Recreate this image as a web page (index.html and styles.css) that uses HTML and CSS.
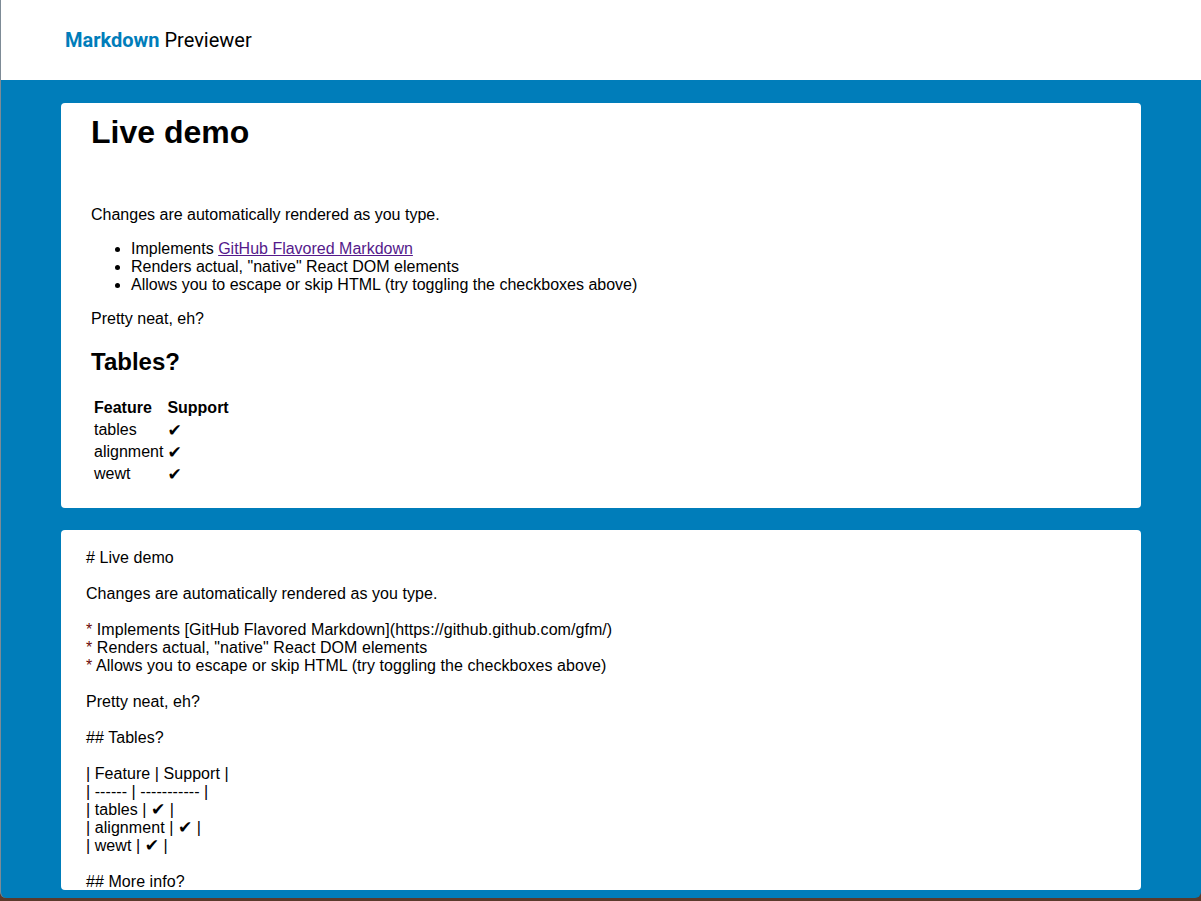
FILE: index.html
```html
<!DOCTYPE html>
<html lang="en">
<head>
<meta charset="utf-8">
<title>Markdown Previewer</title>
<link rel="stylesheet" href="styles.css">
</head>
<body>
<div class="window">
  <header class="topbar">
    <span class="brand">Markdown</span> Previewer
  </header>
  <main class="stage">
    <section class="card preview">
      <h1>Live demo</h1>
      <p>Changes are automatically rendered as you type.</p>
      <ul>
        <li>Implements <a href="#">GitHub Flavored Markdown</a></li>
        <li>Renders actual, "native" React DOM elements</li>
        <li>Allows you to escape or skip HTML (try toggling the checkboxes above)</li>
      </ul>
      <p>Pretty neat, eh?</p>
      <h2>Tables?</h2>
      <table>
        <thead>
          <tr><th>Feature</th><th>Support</th></tr>
        </thead>
        <tbody>
          <tr><td>tables</td><td class="check">✔</td></tr>
          <tr><td>alignment</td><td class="check">✔</td></tr>
          <tr><td>wewt</td><td class="check">✔</td></tr>
        </tbody>
      </table>
    </section>
    <section class="card editor">
<pre class="source"># Live demo

Changes are automatically rendered as you type.

<span class="mk">*</span> Implements [GitHub Flavored Markdown](https://github.github.com/gfm/)
<span class="mk">*</span> Renders actual, "native" React DOM elements
<span class="mk">*</span> Allows you to escape or skip HTML (try toggling the checkboxes above)

Pretty neat, eh?

## Tables?

| Feature | Support |
| ------ | ----------- |
| tables | <span class="check inline">✔</span> |
| alignment | <span class="check inline">✔</span> |
| wewt | <span class="check inline">✔</span> |

## More info?

Read usage information and more on [GitHub](//github.com/rexxars/react-markdown)</pre>
    </section>
  </main>
</div>
</body>
</html>
```

FILE: styles.css
```css
html, body {
  margin: 0;
  padding: 0;
}

body {
  background: #5a3a2b;
  font-family: "Liberation Sans", Arial, sans-serif;
  font-size: 16px;
  line-height: 18px;
  color: #000;
}

.window {
  height: 898px;
  border-left: 1px solid #7d8b96;
  border-radius: 0 0 6px 6px;
  overflow: hidden;
  display: flex;
  flex-direction: column;
  background: #007dba;
}

.topbar {
  height: 80px;
  flex: none;
  background: #fff;
  padding-left: 64px;
  font-family: Roboto, "Liberation Sans", sans-serif;
  font-size: 20px;
  line-height: 80px;
  color: #000;
}

.brand {
  color: #007dba;
  font-weight: bold;
}

.stage {
  flex: 1;
  display: flex;
  flex-direction: column;
  gap: 22px;
  padding: 23px 60px 8px 60px;
}

.card {
  background: #fff;
  border-radius: 4px;
}

.preview {
  padding: 11px 30px 22px;
}

.preview h1 {
  font-size: 32px;
  line-height: 37px;
  font-weight: bold;
  margin: 0 0 55px;
}

.preview p {
  margin: 16px 0;
}

.preview ul {
  margin: 16px 0;
  padding-left: 40px;
}

.preview h2 {
  font-size: 24px;
  line-height: 28px;
  font-weight: bold;
  margin: 20px 0;
}

.preview a {
  color: #551a8b;
  text-decoration: underline;
}

.preview table {
  border-spacing: 2px;
  margin: 0;
}

.preview th,
.preview td {
  padding: 1px;
  text-align: left;
}

.check {
  font-family: "DejaVu Sans", sans-serif;
  font-size: 17px;
  line-height: 18px;
}

.check.inline {
  line-height: 0;
}

.editor {
  height: 360px;
  box-sizing: border-box;
  padding: 19px 25px 18px;
  overflow: hidden;
}

.source {
  margin: 0;
  font-family: "Liberation Sans", Arial, sans-serif;
  font-size: 16px;
  line-height: 18px;
  letter-spacing: 0.06px;
  white-space: pre-wrap;
}

.mk {
  color: #6b0a0a;
}
```
